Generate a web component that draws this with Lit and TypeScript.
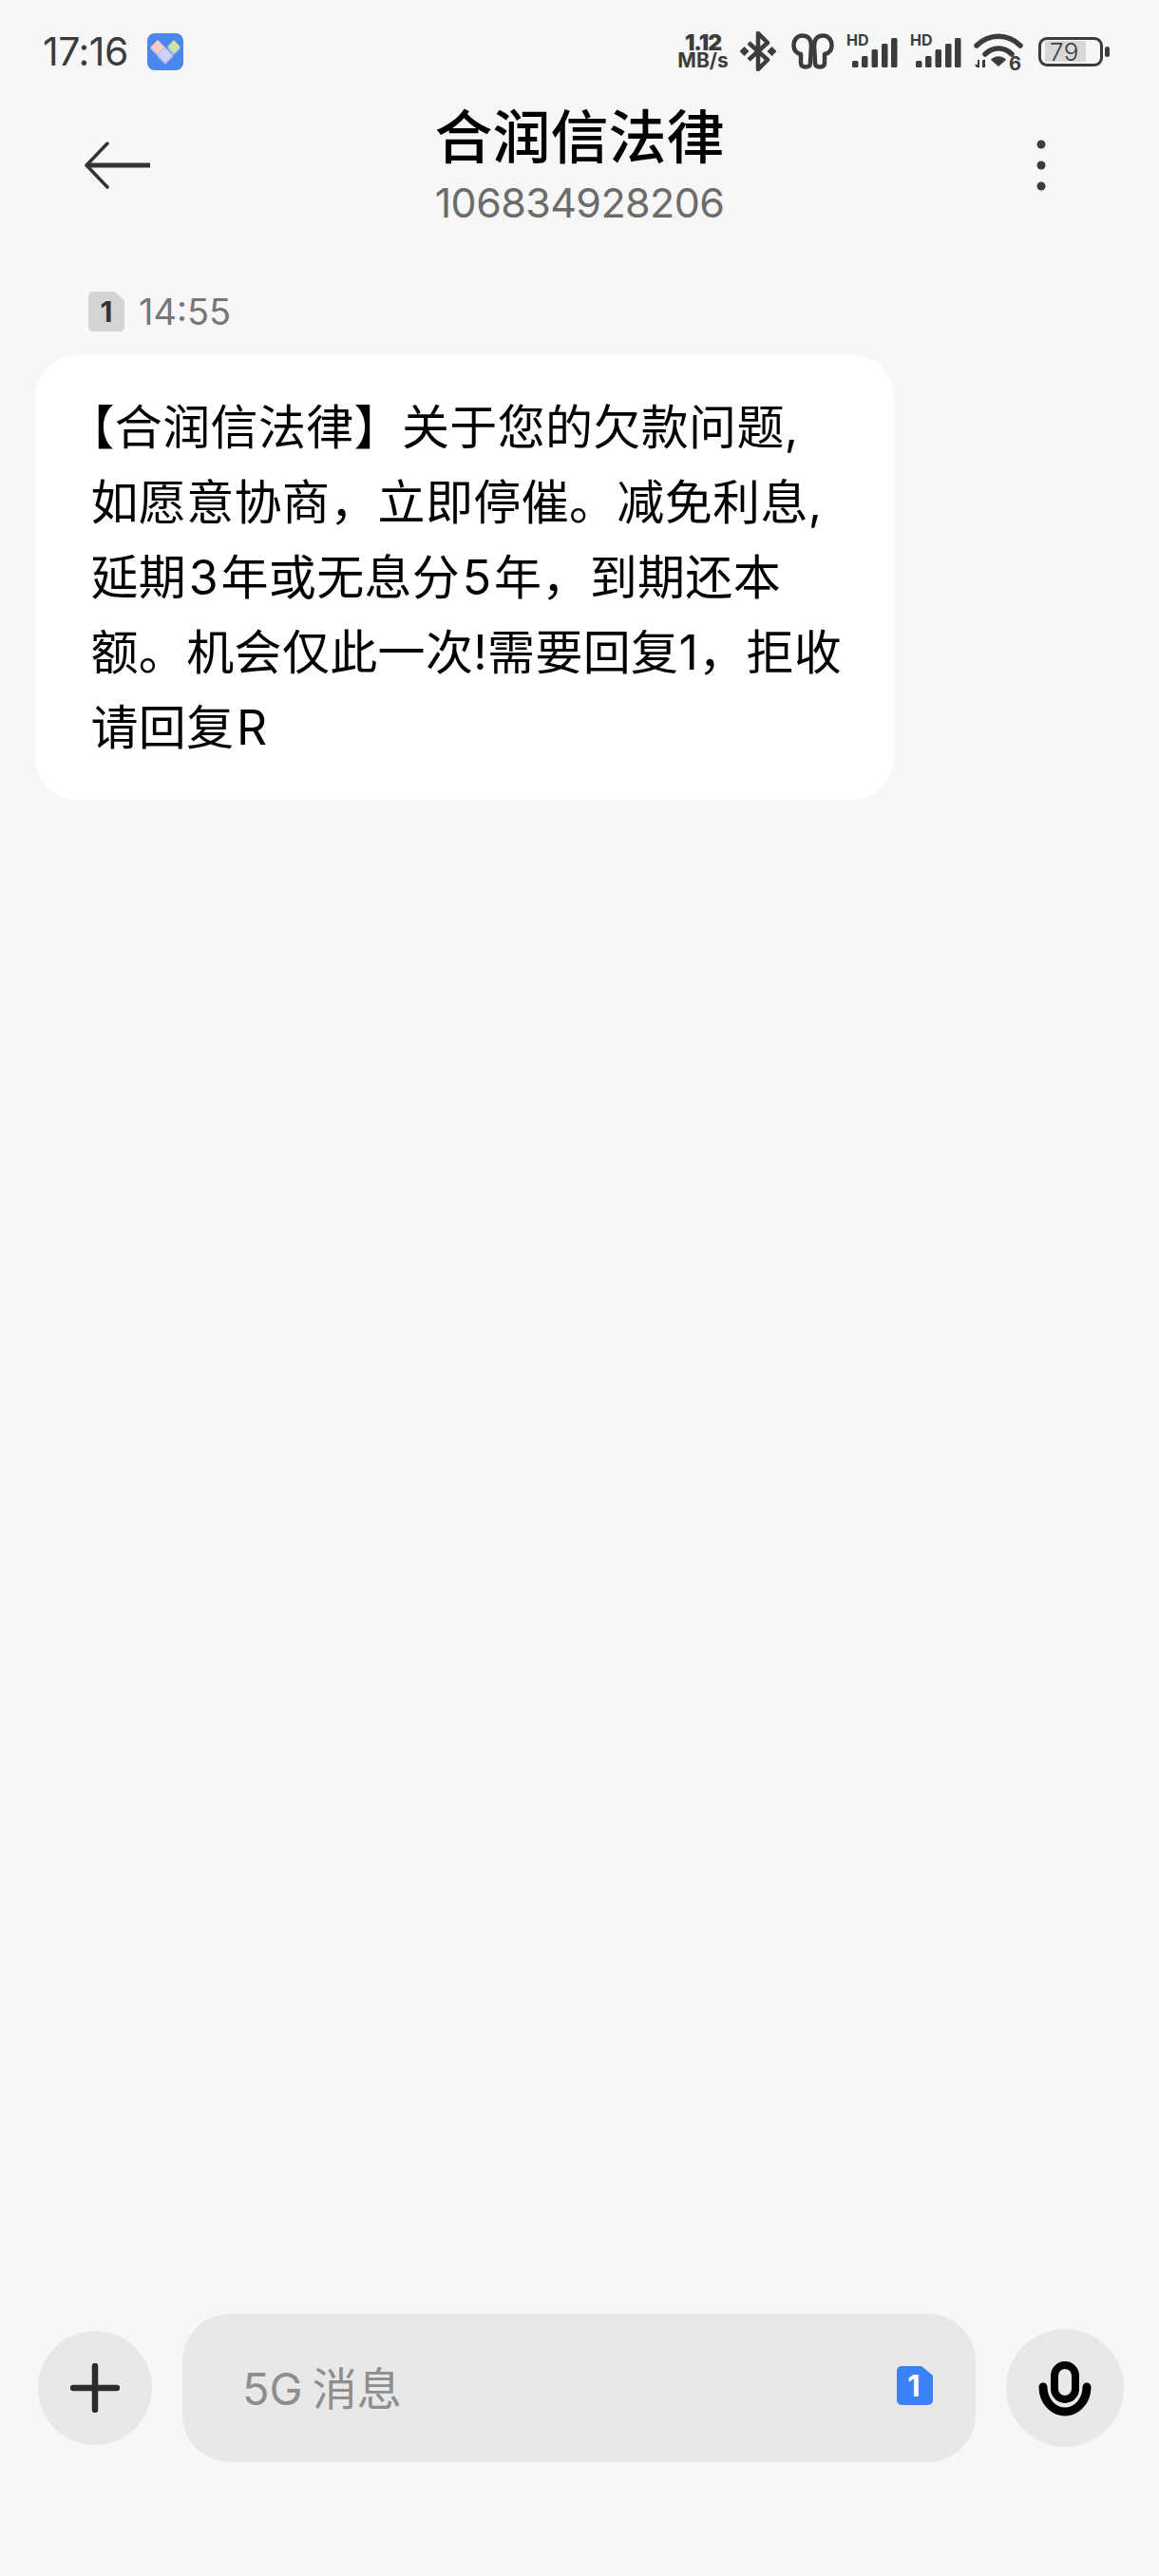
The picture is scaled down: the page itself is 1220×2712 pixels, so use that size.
import { html, css, LitElement } from "lit";
import { customElement } from "lit/decorators.js";

@customElement("app-root")
export class AppRoot extends LitElement {
  static styles = css`
    :host {
      display: flex;
      flex-direction: column;
      height: 2712px;
      background: #f7f7f7;
      font-family: Inter, "Noto Sans CJK SC", sans-serif;
      color: #000;
    }
    svg {
      display: block;
      flex: none;
    }

    .status {
      display: flex;
      align-items: center;
      height: 108px;
      padding: 0 52px 0 45px;
      box-sizing: border-box;
      color: #3c3c3c;
    }
    .clock {
      font-size: 41px;
      width: 110px;
      letter-spacing: -0.5px;
    }
    .spacer {
      flex: 1;
    }
    .speed {
      width: 56px;
      font-size: 21px;
      line-height: 18px;
      font-weight: 700;
      text-align: center;
      white-space: nowrap;
    }
    .speed b {
      font-size: 23px;
      letter-spacing: -1px;
    }
    .bt { margin-left: 11px; }
    .buds { margin-left: 16px; }
    .sig { margin-left: 13px; }
    .wifi { margin-left: 13px; }
    .hd {
      font-size: 16px;
      font-weight: 700;
      fill: #3c3c3c;
    }
    .six {
      font-size: 20px;
      font-weight: 700;
      fill: #3c3c3c;
    }
    .battery-wrap {
      display: flex;
      align-items: center;
      gap: 2px;
      margin-left: 16px;
    }
    .battery {
      width: 68px;
      height: 31px;
      box-sizing: border-box;
      border: 3px solid #3c3c3c;
      border-radius: 9px;
      background: linear-gradient(#d8d8d8, #d8d8d8) no-repeat 4px center / 43px 22px;
      font-size: 26px;
      font-weight: 300;
      line-height: 25px;
      padding-left: 9px;
      letter-spacing: 0.5px;
    }
    .nib {
      width: 5px;
      height: 11px;
      border-radius: 3px;
      background: #3c3c3c;
    }

    .header {
      display: grid;
      grid-template-columns: 1fr auto 1fr;
      align-items: center;
      height: 132px;
      padding: 0 88px;
    }
    .dots {
      justify-self: end;
      margin-right: 31px;
    }
    .who {
      display: flex;
      flex-direction: column;
      align-items: center;
    }
    .name {
      font-size: 61px;
      line-height: 70px;
      font-weight: 500;
    }
    .number {
      font-size: 43px;
      line-height: 52px;
      margin-top: 7px;
      color: #6b6b6b;
      letter-spacing: -0.6px;
    }

    .thread {
      flex: 1;
      padding: 66px 0 0 37px;
    }
    .meta {
      display: flex;
      align-items: center;
      gap: 15px;
      height: 44px;
      margin-left: 56px;
      font-size: 38px;
      color: #777;
    }
    .sim-num {
      font-size: 30px;
      font-weight: 700;
      fill: #333;
      text-anchor: middle;
    }
    .bubble {
      box-sizing: border-box;
      width: 904px;
      height: 468px;
      margin-top: 24px;
      padding: 37px 30px 0 58.5px;
      background: #fff;
      border-radius: 44px;
      font-size: 50px;
      line-height: 79px;
      letter-spacing: 0.35px;
      white-space: nowrap;
    }
    .open {
      font-feature-settings: "halt";
    }
    .num {
      padding: 0 2.5px;
    }

    .composer {
      display: flex;
      align-items: center;
      padding: 0 37px 120px 40px;
      height: 156px;
    }
    .round {
      display: flex;
      align-items: center;
      justify-content: center;
      flex: none;
      border-radius: 50%;
      background: #e8e8e8;
    }
    .plus {
      width: 120px;
      height: 120px;
    }
    .mic {
      width: 124px;
      height: 124px;
      margin-left: 32px;
    }
    .input {
      display: flex;
      align-items: center;
      justify-content: space-between;
      flex: 1;
      height: 156px;
      margin-left: 32px;
      padding: 0 45px 6px 63px;
      box-sizing: border-box;
      border-radius: 50px;
      background: #e8e8e8;
      color: #8e8e8e;
      font-size: 47px;
    }
    .g {
      margin-right: 10px;
    }
    .sim-blue {
      font-size: 31px;
      font-weight: 700;
      fill: #fff;
      text-anchor: middle;
    }
  `;

  private appIcon() {
    return html`<svg width="38" height="39" viewBox="0 0 38 39">
      <rect width="38" height="39" rx="8" fill="#4a86ec" />
      <path d="M11 7l7.500 7.500-7.500 7.500-7.500-7.500z" fill="#f7cdc4" />
      <path d="M3.500 14.500l7.500 7.500 7.500-7.500v2l-7.500 7.500-7.500-7.500z" fill="#c3c8f5" />
      <path d="M28 7l6.500 7-6.500 7-6.500-7z" fill="#cfe3a8" />
      <path d="M21.500 14l6.500 7 6.500-7v2l-6.500 7-6.500-7z" fill="#bcd2d8" />
      <path d="M19 15l8 8-8 8-8-8z" fill="#cdd0fa" />
      <path d="M11 23l8 8 8-8v2l-8 8-8-8z" fill="#b4bcf4" />
    </svg>`;
  }

  private signal() {
    return html`<svg class="sig" width="54" height="42" viewBox="0 0 54 42">
      <text class="hd" x="0" y="15">HD</text>
      <rect x="6" y="31" width="6.500" height="7" rx="1.500" fill="#3c3c3c" />
      <rect x="16" y="26" width="6.500" height="12" rx="1.500" fill="#3c3c3c" />
      <rect x="26.500" y="19" width="6.500" height="19" rx="1.500" fill="#3c3c3c" />
      <rect x="37" y="13" width="6.500" height="25" rx="1.500" fill="#3c3c3c" />
      <rect x="47" y="7" width="6.500" height="31" rx="1.500" fill="#3c3c3c" />
    </svg>`;
  }

  render() {
    return html`
      <div class="status">
        <div class="clock">17:16</div>
        ${this.appIcon()}
        <div class="spacer"></div>
        <div class="speed"><b>1.12</b><br />MB/s</div>
        <svg class="bt" width="38" height="42" viewBox="0 0 38 42">
          <path d="M9 12l20 18-10 10V2l10 10L9 30" fill="none" stroke="#3c3c3c" stroke-width="4.500" stroke-linejoin="round" />
          <path d="M4.500 16l5 5-5 5-5-5zM33.500 16l5 5-5 5-5-5z" fill="#3c3c3c" />
        </svg>
        <svg class="buds" width="45" height="38" viewBox="0 0 45 38">
          <g fill="none" stroke="#3c3c3c" stroke-width="4.500" stroke-linejoin="round">
            <path d="M21 13C21 6 17 2.500 11.500 2.500 6 2.500 2.500 7 2.500 13c0 5 3 8 7.500 9v9c0 3 2 4.500 5 4.500s5-1.500 5-4.500z" />
            <path d="M24 13C24 6 28 2.500 33.500 2.500 39 2.500 42.500 7 42.500 13c0 5-3 8-7.500 9v9c0 3-2 4.500-5 4.500s-5-1.500-5-4.500z" />
          </g>
        </svg>
        ${this.signal()} ${this.signal()}
        <svg class="wifi" width="52" height="50" viewBox="0 -6 52 50">
          <g fill="none" stroke="#3c3c3c" stroke-width="5.500" stroke-linecap="round">
            <path d="M3 13C16 0 36 0 49 13" />
            <path d="M12 22C20 14 32 14 40 22" />
          </g>
          <path d="M18 28C22 23 30 23 34 28L26 35z" fill="#3c3c3c" />
          <path d="M1 33h3v-5l2 0v8H3M9 28h3v8h-3z" fill="#3c3c3c" />
          <text class="six" x="37" y="39">6</text>
        </svg>
        <div class="battery-wrap">
          <div class="battery">79</div>
          <div class="nib"></div>
        </div>
      </div>

      <div class="header">
        <svg width="70" height="50" viewBox="0 0 70 50">
          <path d="M69 25H5" fill="none" stroke="#333" stroke-width="5" stroke-linecap="round" />
          <path d="M25 2L3 25l22 23" fill="none" stroke="#333" stroke-width="3.500" stroke-linecap="round" stroke-linejoin="round" />
        </svg>
        <div class="who">
          <div class="name">合润信法律</div>
          <div class="number">106834928206</div>
        </div>
        <svg class="dots" width="10" height="54" viewBox="0 0 10 54">
          <circle cx="5" cy="5" r="4.500" fill="#3c3c3c" />
          <circle cx="5" cy="27" r="4.500" fill="#3c3c3c" />
          <circle cx="5" cy="49" r="4.500" fill="#3c3c3c" />
        </svg>
      </div>

      <div class="thread">
        <div class="meta">
          <svg width="38" height="42" viewBox="0 0 38 42">
            <path d="M5 0h22l11 9v28a5 5 0 0 1-5 5H5a5 5 0 0 1-5-5V5a5 5 0 0 1 5-5z" fill="#d4d4d4" />
            <text class="sim-num" x="19" y="32">1</text>
          </svg>
          <span>14:55</span>
        </div>
        <div class="bubble">
          <span class="open">【</span>合润信法律】关于您的欠款问题,<br />
          如愿意协商，立即停催。减免利息,<br />
          延期<span class="num">3</span>年或无息分<span class="num">5</span>年，到期还本<br />
          额。机会仅此一次!需要回复1，拒收<br />
          请回复<span class="num">R</span>
        </div>
      </div>

      <div class="composer">
        <div class="round plus">
          <svg width="52" height="52" viewBox="0 0 52 52">
            <path d="M26 3v46M3 26h46" stroke="#2c2c2c" stroke-width="6.500" stroke-linecap="round" />
          </svg>
        </div>
        <div class="input">
          <span><span class="g">5G</span>消息</span>
          <svg width="38" height="41" viewBox="0 0 38 41">
            <path d="M5 0h21l12 10v26a5 5 0 0 1-5 5H5a5 5 0 0 1-5-5V5a5 5 0 0 1 5-5z" fill="#3a82f7" />
            <text class="sim-blue" x="18" y="32">1</text>
          </svg>
        </div>
        <div class="round mic">
          <svg width="60" height="62" viewBox="0 0 60 62">
            <rect x="19" y="7" width="22" height="36" rx="11" fill="none" stroke="#000" stroke-width="8" />
            <path d="M7 30a23 26 0 0 0 46 0" fill="none" stroke="#000" stroke-width="9" stroke-linecap="round" />
          </svg>
        </div>
      </div>
    `;
  }
}
